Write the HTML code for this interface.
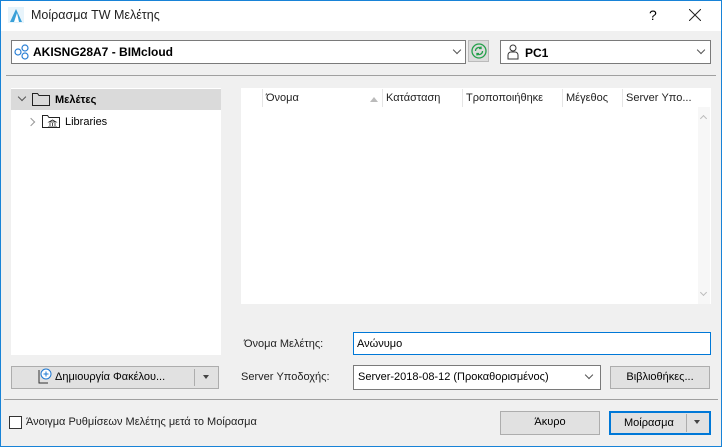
<!DOCTYPE html><html><head><style>
*{box-sizing:border-box;margin:0;padding:0}
body{width:722px;height:447px;font-family:"Liberation Sans",sans-serif;font-size:11px;color:#000;position:relative;overflow:hidden;background:#f0f0f0}
.win{position:absolute;left:0;top:0;width:722px;height:447px;background:#f0f0f0}
.frame{position:absolute;left:0;top:0;width:722px;height:447px;border:1px solid #1883d7;pointer-events:none}
.a{position:absolute}
.title{left:0;top:0;width:722px;height:31px;background:#fff}
.box{background:#fff;border:1px solid #7a7a7a}
.btn{background:#e1e1e1;border:1px solid #adadad;text-align:center;line-height:21px}
.chev{position:absolute;width:6px;height:6px;border-right:1px solid #555;border-bottom:1px solid #555;transform:rotate(45deg)}
.hd{position:absolute;top:0;height:18px;line-height:18px;border-left:1px solid #e5e5e5;padding-left:3px;color:#222}
</style></head><body><div class="win">
<div class="a title"></div>
<svg class="a" style="left:8px;top:7px" width="16" height="16"><rect width="16" height="16" fill="#e8f4fb"/><path d="M2 15 L8 2 L14 15 Z" fill="#3aa0d8"/><path d="M6 15 L9 6 L11 15Z" fill="#fff"/></svg>
<div class="a" style="left:31px;top:8px;font-size:12.5px;color:#222">Μοίρασμα TW Μελέτης</div>
<div class="a" style="left:649px;top:7px;font-size:14px">?</div>
<svg class="a" style="left:689px;top:9px" width="12" height="12" stroke="#222" stroke-width="1"><path d="M0 0L12 12M12 0L0 12"/></svg>

<div class="a box" style="left:11px;top:40px;width:455px;height:24px"></div>
<svg class="a" style="left:14px;top:44px" width="16" height="16" fill="none" stroke="#2a7fd4" stroke-width="1.2"><circle cx="4" cy="8" r="3"/><circle cx="11" cy="4" r="3"/><circle cx="11" cy="12" r="3"/></svg>
<div class="a" style="left:33px;top:45px;font-weight:bold;font-size:12px">AKISNG28A7 - BIMcloud</div>
<div class="chev" style="left:454px;top:47px"></div>
<div class="a" style="left:468px;top:40px;width:21px;height:22px;background:#dcdcdc;border:1px solid #bbb"></div>
<svg class="a" style="left:471px;top:43px" width="16" height="16" fill="none" stroke="#23a04a" stroke-width="1.3"><circle cx="8" cy="8" r="7"/><path d="M4.5 8a3.5 3.5 0 0 1 6-2.5M11.5 8a3.5 3.5 0 0 1-6 2.5M10 3.5v2h-2M6 12.5v-2h2"/></svg>
<div class="a box" style="left:500px;top:40px;width:211px;height:24px"></div>
<svg class="a" style="left:506px;top:43px" width="14" height="17" fill="none" stroke="#333"><circle cx="7" cy="5" r="3"/><path d="M2 16v-4a3 3 0 0 1 3-3h4a3 3 0 0 1 3 3v4z"/></svg>
<div class="a" style="left:525px;top:46px;font-weight:bold;font-size:12px">PC1</div>
<div class="chev" style="left:698px;top:47px"></div>
<div class="a" style="left:6px;top:75px;width:710px;height:1px;background:#a0a0a0"></div>

<div class="a" style="left:11px;top:88px;width:210px;height:267px;background:#fff"></div>
<div class="a" style="left:11px;top:89px;width:210px;height:21px;background:#dadada"></div>
<div class="chev" style="left:19px;top:94px"></div>
<svg class="a" style="left:32px;top:91px" width="18" height="15" fill="none" stroke="#222"><path d="M.5 2.5h5l1.5 2h10.5v10h-17z"/></svg>
<div class="a" style="left:55px;top:94px;font-weight:bold">Μελέτες</div>
<div class="chev" style="left:28px;top:119px;transform:rotate(-45deg);border-color:#999"></div>
<svg class="a" style="left:42px;top:113px" width="18" height="16" fill="none" stroke="#222"><path d="M.5 2.5h5l1.5 2h10.5v10h-17z"/><path d="M6 14h9M7 9l3.5-2 3.5 2zM8 10v3M10.5 10v3M13 10v3" stroke-width=".8"/></svg>
<div class="a" style="left:65px;top:116px">Libraries</div>

<div class="a" style="left:241px;top:88px;width:470px;height:216px;background:#fff"></div>
<div class="hd" style="left:262px;top:89px;width:120px">Όνομα</div>
<div class="a" style="left:370px;top:97px;width:0;height:0;border:4px solid transparent;border-bottom:5px solid #bbb;border-top:0"></div>
<div class="hd" style="left:382px;top:89px;width:80px">Κατάσταση</div>
<div class="hd" style="left:462px;top:89px;width:100px">Τροποποιήθηκε</div>
<div class="hd" style="left:562px;top:89px;width:60px">Μέγεθος</div>
<div class="hd" style="left:622px;top:89px;width:72px">Server Υπο...</div>
<div class="a" style="left:698px;top:107px;width:12px;height:197px;background:#f7f7f7"></div>
<div class="chev" style="left:701px;top:116px;transform:rotate(-135deg);border-color:#bbb;width:5px;height:5px"></div>
<div class="chev" style="left:701px;top:290px;border-color:#bbb;width:5px;height:5px"></div>

<div class="a" style="left:244px;top:338px;color:#222">Όνομα Μελέτης:</div>
<div class="a" style="left:353px;top:332px;width:358px;height:23px;background:#fff;border:1px solid #0078d7"></div>
<div class="a" style="left:357px;top:338px">Ανώνυμο</div>

<div class="a btn" style="left:11px;top:366px;width:208px;height:23px"></div>
<svg class="a" style="left:36px;top:368px" width="16" height="16" fill="none"><path d="M3 2v13h9" stroke="#333"/><circle cx="10" cy="6" r="5" fill="#fff" stroke="#1e78d2"/><path d="M10 3.5v5M7.5 6h5" stroke="#1e78d2"/></svg>
<div class="a" style="left:55px;top:371px">Δημιουργία Φακέλου...</div>
<div class="a" style="left:194px;top:369px;width:1px;height:17px;background:#adadad"></div>
<div class="a" style="left:203px;top:375px;border:3.5px solid transparent;border-top:4px solid #444"></div>
<div class="a" style="left:241px;top:371px;color:#222">Server Υποδοχής:</div>
<div class="a box" style="left:353px;top:365px;width:248px;height:25px"></div>
<div class="a" style="left:358px;top:371px">Server-2018-08-12 (Προκαθορισμένος)</div>
<div class="chev" style="left:586px;top:372px"></div>
<div class="a btn" style="left:610px;top:366px;width:100px;height:23px">Βιβλιοθήκες...</div>

<div class="a" style="left:4px;top:399px;width:714px;height:1px;background:#a0a0a0"></div>
<div class="a" style="left:9px;top:416px;width:13px;height:13px;background:#fff;border:1px solid #333"></div>
<div class="a" style="left:26px;top:416px;color:#222">Άνοιγμα Ρυθμίσεων Μελέτης μετά το Μοίρασμα</div>
<div class="a btn" style="left:500px;top:411px;width:100px;height:24px">Άκυρο</div>
<div class="a btn" style="left:609px;top:411px;width:102px;height:24px;border:2px solid #0078d7;text-align:left;padding-left:13px;line-height:20px">Μοίρασμα</div>
<div class="a" style="left:686px;top:414px;width:1px;height:18px;background:#adadad"></div>
<div class="a" style="left:694px;top:420px;border:3.5px solid transparent;border-top:4px solid #444"></div>
</div><div class="frame"></div></body></html>
